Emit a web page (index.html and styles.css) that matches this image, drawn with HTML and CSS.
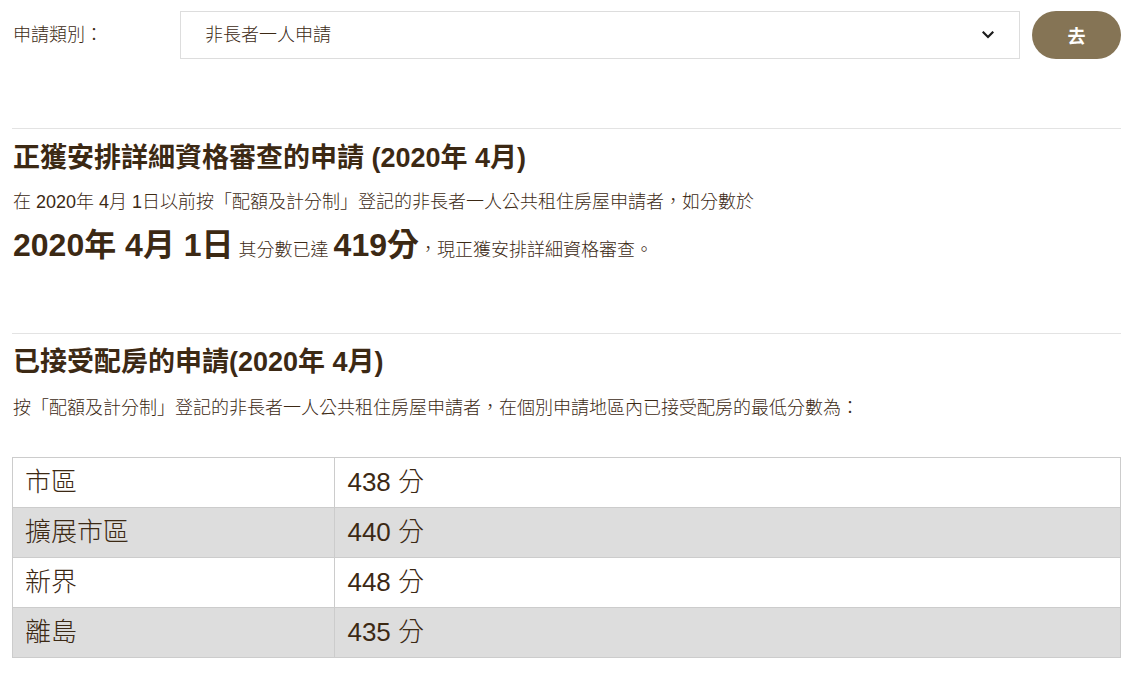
FILE: index.html
```html
<!DOCTYPE html>
<html lang="zh-Hant">
<head>
<meta charset="utf-8">
<title>申請類別</title>
<link rel="stylesheet" href="styles.css">
</head>
<body>
<div class="page">
  <form class="filter">
    <label class="filter-label">申請類別：</label>
    <div class="select-box">
      <span class="select-value">非長者一人申請</span>
      <svg class="chevron" width="12" height="8" viewBox="0 0 12 8"><path d="M1.5 1.5 L6 6 L10.5 1.5" fill="none" stroke="#1c1c1c" stroke-width="2.2" stroke-linecap="square"/></svg>
    </div>
    <button type="button" class="go-btn">去</button>
  </form>

  <section class="block block-first">
    <h2 class="block-title">正獲安排詳細資格審查的申請 (2020年 4月)</h2>
    <p class="block-text">在 2020年 4月 1日以前按「配額及計分制」登記的非長者一人公共租住房屋申請者，如分數於</p>
    <p class="big-line"><strong class="big">2020年 4月 1日</strong> 其分數已達 <strong class="big">419分</strong>，現正獲安排詳細資格審查。</p>
  </section>

  <section class="block block-second">
    <h2 class="block-title">已接受配房的申請(2020年 4月)</h2>
    <p class="block-text">按「配額及計分制」登記的非長者一人公共租住房屋申請者，在個別申請地區內已接受配房的最低分數為：</p>
    <table class="score-table">
      <tr><td class="col-area">市區</td><td>438 分</td></tr>
      <tr class="alt"><td class="col-area">擴展市區</td><td>440 分</td></tr>
      <tr><td class="col-area">新界</td><td>448 分</td></tr>
      <tr class="alt"><td class="col-area">離島</td><td>435 分</td></tr>
    </table>
  </section>
</div>
</body>
</html>
```

FILE: styles.css
```css
html, body {
  margin: 0;
  padding: 0;
  background: #ffffff;
}

body {
  font-family: "Liberation Sans", "Noto Sans CJK TC", sans-serif;
  color: #3c2914;
  font-size: 18px;
  font-weight: 300;
}

.page {
  padding: 11px 12px 0 12px;
}

.filter {
  display: flex;
  align-items: center;
  height: 48px;
  margin: 0;
}

.filter-label {
  width: 168px;
  flex: none;
  padding-left: 1px;
  box-sizing: border-box;
  font-size: 18px;
  line-height: 24px;
  color: #3c2914;
}

.select-box {
  flex: 1;
  height: 48px;
  box-sizing: border-box;
  border: 1px solid #dddddd;
  display: flex;
  align-items: center;
  justify-content: space-between;
  padding: 0 25px 0 24px;
  background: #ffffff;
}

.select-value {
  font-size: 18px;
  line-height: 24px;
  color: #3c2914;
}

.chevron {
  display: block;
}

.go-btn {
  flex: none;
  width: 89px;
  height: 48px;
  margin-left: 12px;
  border: none;
  border-radius: 24px;
  background: #857455;
  color: #ffffff;
  font-family: "Liberation Sans", "Noto Sans CJK TC", sans-serif;
  font-size: 18px;
  font-weight: bold;
  padding: 0;
}

.block {
  border-top: 1px solid #e3e3e3;
}

.block-first {
  margin-top: 69px;
  padding-top: 13px;
}

.block-second {
  margin-top: 68px;
  padding-top: 12px;
}

.block-title {
  margin: 0;
  padding-left: 1px;
  font-size: 27px;
  line-height: 32px;
  font-weight: bold;
  color: #3c2914;
}

.block-text {
  margin: 15px 0 0 0;
  padding-left: 1px;
  font-size: 18px;
  line-height: 26px;
}

.block-second .block-text {
  margin-top: 17px;
}

.big-line {
  margin: 10px 0 0 0;
  padding-left: 1px;
  font-size: 18px;
  line-height: 40px;
  height: 40px;
}

.big {
  font-size: 32px;
  font-weight: bold;
}

.score-table {
  width: 100%;
  margin-top: 36px;
  border-collapse: collapse;
}

.score-table td {
  border: 1px solid #cccccc;
  padding: 0 12px;
  font-size: 26px;
  line-height: 49px;
  height: 49px;
  color: #3c2914;
}

.score-table .col-area {
  width: 29.1%;
}

.score-table tr.alt td {
  background: #dddddd;
}
```
